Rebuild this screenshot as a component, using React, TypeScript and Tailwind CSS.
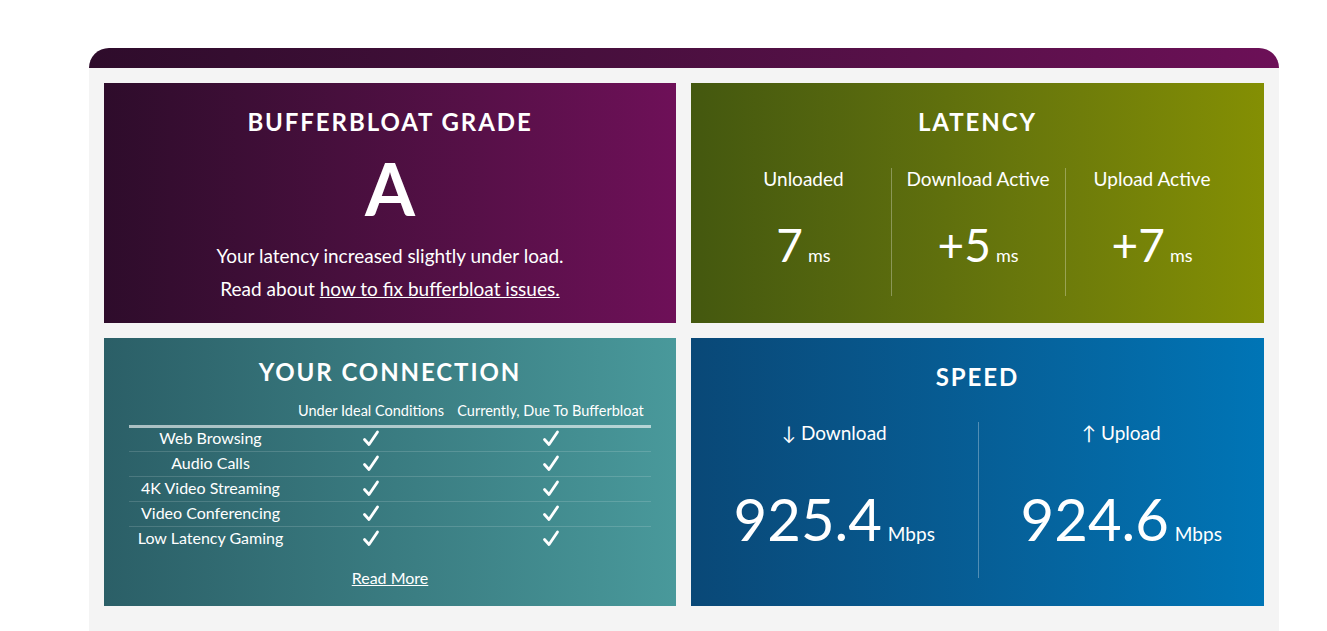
import React from 'react';

const FONT = { fontFamily: '"Lato", "Open Sans", sans-serif' };

function Check() {
  return (
    <svg width="20" height="20" viewBox="0 0 20 20" className="inline-block">
      <path d="M3.5 10.5 L8 15.5 L16.5 3" fill="none" stroke="white" strokeWidth="2.8" strokeLinecap="round" strokeLinejoin="round" />
    </svg>
  );
}

const ROWS = ['Web Browsing', 'Audio Calls', '4K Video Streaming', 'Video Conferencing', 'Low Latency Gaming'];

function Heading({ children }: { children: React.ReactNode }) {
  return (
    <h2 className="text-[24px] font-bold tracking-[0.08em] text-white text-center leading-none">
      {children}
    </h2>
  );
}

export default function App() {
  return (
    <div className="min-h-screen bg-white" style={FONT}>
      <div className="ml-[89px] pt-[48px] w-[1190px]">
        <div className="h-[20px] rounded-t-[20px] bg-linear-to-r from-[#2e0c2b] to-[#6c1057]" />
        <div className="bg-[#f4f4f4] p-[15px] pb-[30px] grid grid-cols-[572px_573px] gap-[15px]">
          {/* Bufferbloat grade */}
          <div className="h-[240px] bg-linear-to-r from-[#2e0c2b] to-[#6e1058] text-white flex flex-col items-center pt-[27px]">
            <Heading>BUFFERBLOAT GRADE</Heading>
            <div className="text-[72px] font-bold leading-none mt-[18px]">A</div>
            <p className="text-[19px] mt-[15px] leading-[33px] text-center">
              Your latency increased slightly under load.
              <br />
              Read about <a className="underline">how to fix bufferbloat issues.</a>
            </p>
          </div>

          {/* Latency */}
          <div className="h-[240px] bg-linear-to-r from-[#44580f] to-[#848f03] text-white flex flex-col items-center pt-[27px]">
            <Heading>LATENCY</Heading>
            <div className="grid grid-cols-3 w-[522px] mt-[34px]">
              {[
                ['Unloaded', '7'],
                ['Download Active', '+5'],
                ['Upload Active', '+7'],
              ].map(([label, val], i) => (
                <div
                  key={label}
                  className={`h-[128px] flex flex-col items-center ${i > 0 ? 'border-l border-white/30' : ''}`}
                >
                  <div className="text-[19px] leading-none mt-[1px]">{label}</div>
                  <div className="mt-[34px] flex items-baseline gap-[5px]">
                    <span className="text-[46px] leading-none">{val}</span>
                    <span className="text-[18px]">ms</span>
                  </div>
                </div>
              ))}
            </div>
          </div>

          {/* Your connection */}
          <div className="h-[268px] bg-linear-to-r from-[#2b5f67] to-[#49999b] text-white flex flex-col items-center pt-[22px]">
            <Heading>YOUR CONNECTION</Heading>
            <table className="w-[522px] mt-[16px] text-center border-collapse">
              <thead>
                <tr className="text-[14.5px] border-b-[3px] border-white/60">
                  <th className="w-[163px]" />
                  <th className="font-normal w-[158px] pb-[3px]">Under Ideal Conditions</th>
                  <th className="font-normal pb-[3px]">Currently, Due To Bufferbloat</th>
                </tr>
              </thead>
              <tbody>
                {ROWS.map((r, i) => (
                  <tr key={r} className={`h-[25px] text-[16px] ${i < ROWS.length - 1 ? 'border-b border-white/15' : ''}`}>
                    <td className="leading-none pb-[2px]">{r}</td>
                    <td className="leading-none"><Check /></td>
                    <td className="leading-none"><Check /></td>
                  </tr>
                ))}
              </tbody>
            </table>
            <a className="underline text-[16px] mt-[15px]">Read More</a>
          </div>

          {/* Speed */}
          <div className="h-[268px] bg-linear-to-r from-[#094877] to-[#0075b6] text-white flex flex-col items-center pt-[27px]">
            <Heading>SPEED</Heading>
            <div className="grid grid-cols-2 w-full mt-[33px]">
              {[
                ['↓ Download', '925.4'],
                ['↑ Upload', '924.6'],
              ].map(([label, val], i) => (
                <div
                  key={label}
                  className={`h-[156px] flex flex-col items-center ${i > 0 ? 'border-l border-white/30' : ''}`}
                >
                  <div className="text-[19px] leading-none mt-[1px]">{label}</div>
                  <div className="mt-[48px] flex items-baseline gap-[6px]">
                    <span className="text-[58px] leading-none">{val}</span>
                    <span className="text-[19px]">Mbps</span>
                  </div>
                </div>
              ))}
            </div>
          </div>
        </div>
      </div>
    </div>
  );
}
